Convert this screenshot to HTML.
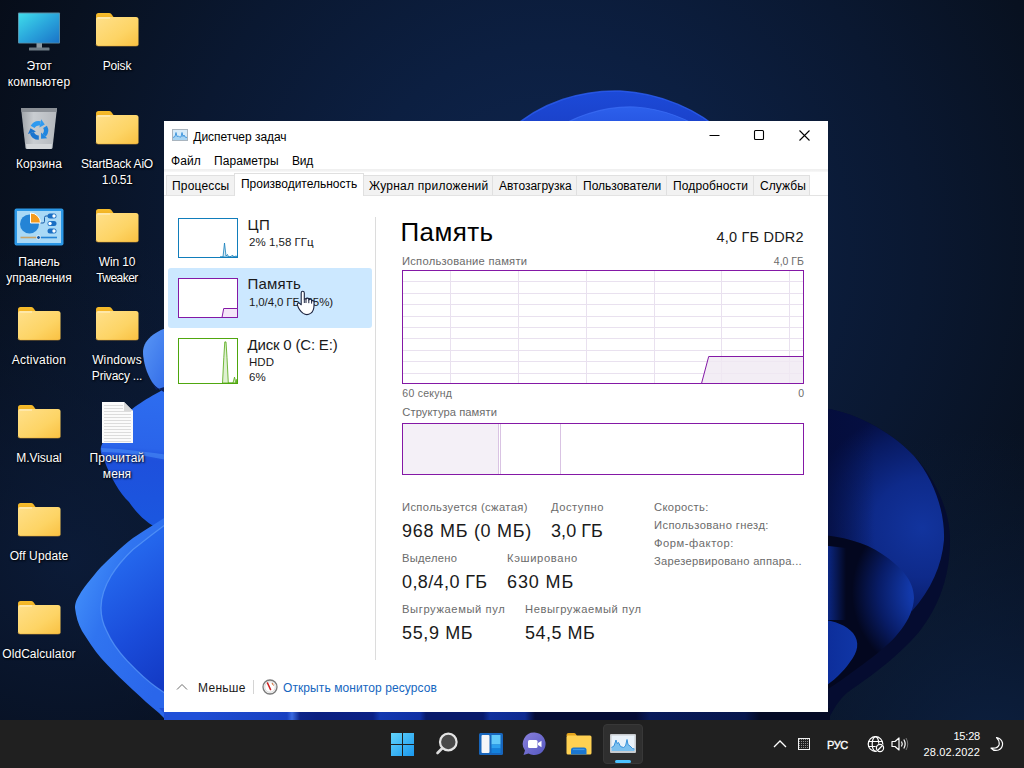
<!DOCTYPE html>
<html lang="ru">
<head>
<meta charset="utf-8">
<title>Диспетчер задач</title>
<style>
*{box-sizing:border-box;margin:0;padding:0}
html,body{width:1024px;height:768px;overflow:hidden}
body{position:relative;background:#08111f;font-family:"Liberation Sans",sans-serif;font-size:12px;color:#000}
.abs{position:absolute}
#wall{position:absolute;left:0;top:0;width:1024px;height:768px}
/* desktop icons */
.ico{position:absolute;width:78px;text-align:center;color:#fff;font-size:12px;line-height:16px;text-shadow:1px 1px 2px rgba(0,0,0,.95),0 0 2px rgba(0,0,0,.55)}
.ico svg{display:block;margin:0 auto}
.ico span{display:block;white-space:nowrap}
/* window */
#win{position:absolute;left:164px;top:121px;width:664px;height:591px;background:#fff}
.t{position:absolute;white-space:nowrap;line-height:1}
.g{color:#6b6b6b}
.tab{position:absolute;top:54px;height:21px;background:#f2f2f2;border:1px solid #e0e0e0;border-bottom:none}
/* taskbar */
#tb{position:absolute;left:0;top:720px;width:1024px;height:48px;background:#202020}
#tb .t{color:#fff}
</style>
</head>
<body>
<svg id="wall" viewBox="0 0 1024 768">
<defs>
<radialGradient id="bgG" gradientUnits="userSpaceOnUse" cx="550" cy="250" r="620"><stop offset="0" stop-color="#0f2650"/><stop offset="0.33" stop-color="#0c1f41"/><stop offset="0.6" stop-color="#0a1831"/><stop offset="0.85" stop-color="#081120"/><stop offset="1" stop-color="#060c18"/></radialGradient>
<linearGradient id="topA" x1="0" y1="0" x2="0" y2="1"><stop offset="0" stop-color="#1c4ad8"/><stop offset="1" stop-color="#1a3fc6"/></linearGradient>
<linearGradient id="topB" x1="0" y1="0" x2="0" y2="1"><stop offset="0" stop-color="#2c60ec"/><stop offset="1" stop-color="#2450dc"/></linearGradient>
<linearGradient id="lf1" x1="0" y1="0" x2="1" y2="1"><stop offset="0" stop-color="#5a98f6"/><stop offset="1" stop-color="#2a62e4"/></linearGradient>
<linearGradient id="lf2" gradientUnits="userSpaceOnUse" x1="150" y1="385" x2="140" y2="535"><stop offset="0" stop-color="#2e6ef0"/><stop offset="0.42" stop-color="#2a64ea"/><stop offset="0.5" stop-color="#1e50dc"/><stop offset="1" stop-color="#1a58e0"/></linearGradient>
<linearGradient id="lf3" gradientUnits="userSpaceOnUse" x1="75" y1="600" x2="175" y2="640"><stop offset="0" stop-color="#3f8af8"/><stop offset="0.3" stop-color="#3074f0"/><stop offset="1" stop-color="#2a66ea"/></linearGradient>
<linearGradient id="lf4" gradientUnits="userSpaceOnUse" x1="101" y1="580" x2="180" y2="680"><stop offset="0" stop-color="#2466ec"/><stop offset="0.5" stop-color="#1a4cda"/><stop offset="1" stop-color="#1238c2"/></linearGradient>
<radialGradient id="rtA" gradientUnits="userSpaceOnUse" cx="922" cy="528" r="118"><stop offset="0" stop-color="#12349e"/><stop offset="0.42" stop-color="#0e2a8a"/><stop offset="0.78" stop-color="#081a62"/><stop offset="1" stop-color="#050f42"/></radialGradient><linearGradient id="rtA2" gradientUnits="userSpaceOnUse" x1="826" y1="0" x2="875" y2="0"><stop offset="0" stop-color="#040c38" stop-opacity=".6"/><stop offset="1" stop-color="#040c38" stop-opacity="0"/></linearGradient><radialGradient id="bgG2" gradientUnits="userSpaceOnUse" cx="990" cy="760" r="330"><stop offset="0" stop-color="#0d2244" stop-opacity=".9"/><stop offset="1" stop-color="#0d2244" stop-opacity="0"/></radialGradient>
<radialGradient id="rtB" gradientUnits="userSpaceOnUse" cx="940" cy="592" r="88"><stop offset="0" stop-color="#1744be"/><stop offset="0.35" stop-color="#1238a8"/><stop offset="0.7" stop-color="#081c66"/><stop offset="1" stop-color="#03071f"/></radialGradient><linearGradient id="rtB2" gradientUnits="userSpaceOnUse" x1="827" y1="0" x2="846" y2="0"><stop offset="0" stop-color="#0b2888"/><stop offset="1" stop-color="#0b2888" stop-opacity="0"/></linearGradient>
<linearGradient id="rtC" x1="0" y1="0" x2="1" y2="0"><stop offset="0" stop-color="#0c2c98"/><stop offset="1" stop-color="#1036a6"/></linearGradient>
<linearGradient id="bs" gradientUnits="userSpaceOnUse" x1="164" y1="0" x2="830" y2="0"><stop offset="0.0000" stop-color="#2050d8"/><stop offset="0.0991" stop-color="#1c48cc"/><stop offset="0.1847" stop-color="#1840c0"/><stop offset="0.1922" stop-color="#3a6ae0"/><stop offset="0.2042" stop-color="#0c2488"/><stop offset="0.2297" stop-color="#0a1f80"/><stop offset="0.3138" stop-color="#0a2084"/><stop offset="0.3243" stop-color="#1238b0"/><stop offset="0.3844" stop-color="#1030a4"/><stop offset="0.3934" stop-color="#081a6a"/><stop offset="0.4790" stop-color="#081a6a"/><stop offset="0.4895" stop-color="#10309c"/><stop offset="0.5420" stop-color="#0e2a90"/><stop offset="0.5571" stop-color="#050c35"/><stop offset="0.7087" stop-color="#050c35"/><stop offset="0.7297" stop-color="#081a5a"/><stop offset="0.8724" stop-color="#07164c"/><stop offset="0.8949" stop-color="#040a25"/><stop offset="1.0000" stop-color="#040a25"/></linearGradient><radialGradient id="bgG3" gradientUnits="userSpaceOnUse" cx="70" cy="560" r="330"><stop offset="0" stop-color="#0c1d3c" stop-opacity=".85"/><stop offset="1" stop-color="#0c1d3c" stop-opacity="0"/></radialGradient><filter id="bl1"><feGaussianBlur stdDeviation="1.2"/></filter>
<filter id="bl3"><feGaussianBlur stdDeviation="3"/></filter>
</defs>
<rect width="1024" height="768" fill="url(#bgG)"/><rect width="1024" height="768" fill="url(#bgG2)"/><rect width="1024" height="768" fill="url(#bgG3)"/>
<!-- top bloom -->
<path d="M505 135 C540 100 585 90 620 91 C660 93 700 110 725 135 Z" fill="url(#topA)"/>
<path d="M545 135 C580 112 610 106 635 107 C665 109 690 120 712 135 Z" fill="url(#topB)"/>
<path d="M505 135 C540 100 585 90 620 91 C660 93 700 110 725 135" fill="none" stroke="#2c5cf0" stroke-width="1.500" opacity=".8"/>
<path d="M545 135 C580 112 610 106 635 107 C665 109 690 120 712 135" fill="none" stroke="#3a6cf4" stroke-width="1.200" opacity=".8"/>
<!-- right bloom -->
<path d="M820 408 C850 410 890 430 914 456 C935 478 950 510 950 540 C950 575 940 605 919 632 C895 660 865 680 848 692 C838 700 832 712 826 724 L820 724 Z" fill="#050c30"/>
<path d="M820 408 C850 410 890 430 914 456 C933 478 945 510 944 540 C942 565 931 590 912 611 C890 590 860 545 820 535 Z" fill="url(#rtA)"/>
<path d="M820 408 C850 410 890 430 914 456 L914 560 L820 535 Z" fill="url(#rtA2)"/>
<path d="M820 535 C840 536 865 542 882 554 C900 566 914 580 914 598 C913 620 895 640 874 656 C855 670 840 682 820 694 Z" fill="url(#rtB)"/>
<path d="M820 545 L846 548 L846 620 L820 620 Z" fill="url(#rtB2)"/>
<path d="M820 620 C835 620 847 626 853 633 C860 642 858 652 850 662 C843 672 835 680 820 690 Z" fill="url(#rtC)"/>
<!-- left bloom -->
<path d="M175 384 C165 388 140 402 131 410 C118 422 104 438 101 447 C100 452 102 456 104 460 C110 476 120 494 129 502 C136 512 146 524 162 530 L175 532 Z" fill="url(#lf2)"/>
<path d="M101 448 C125 449 150 452 175 456 L175 462 C150 456 125 452 102 452 Z" fill="#4d8ff8" opacity=".55"/>
<path d="M175 326 C160 328 143 338 143 352 C143 362 147 374 152 382 C156 388 162 392 175 396 Z" fill="url(#lf1)"/>
<path d="M152 382 C156 388 162 392 175 396 L175 384 C168 386 160 388 156 390 Z" fill="#0c1f5c"/>
<path d="M175 511 C160 521 145 530 133 538 C120 548 108 560 101 567 C92 577 82 590 80 594 C76 600 75 604 75 608 C76 616 78 624 82 631 C88 640 94 650 101 658 C110 668 120 678 133 690 C142 698 150 706 159 713 L170 724 L182 724 L182 505 Z" fill="url(#lf3)"/>
<path d="M175 518 C160 528 145 540 133 549.600 C124 558 116 568 111 576 C105 586 101 598 101 608 C101 616 103 624 106.700 631 C111 641 118 651 127 660.600 C136 670 146 680 156 687 L175 700 Z" fill="url(#lf4)"/>
<path d="M175 518 C160 528 145 540 133 549.600 C124 558 116 568 111 576 C105 586 101 598 101 608 C101 616 103 624 106.700 631 C111 641 118 651 127 660.600 C136 670 146 680 156 687 L175 700" fill="none" stroke="#5c9cfa" stroke-width="1.300" opacity=".7"/>
<!-- bottom strip -->
<rect x="164" y="708" width="666" height="14" fill="url(#bs)"/>
<path d="M159 708 L175 724 L200 724 L200 708 Z" fill="#2050d8"/>
</svg>

<div id="icons">
<svg width="0" height="0" style="position:absolute"><defs>
<linearGradient id="fB" x1="0" y1="0" x2="1" y2="1"><stop offset="0" stop-color="#ffe08a"/><stop offset="0.6" stop-color="#fdd465"/><stop offset="1" stop-color="#f9c142"/></linearGradient>
<linearGradient id="fT" x1="0" y1="0" x2="0" y2="1"><stop offset="0" stop-color="#f7bd2c"/><stop offset="1" stop-color="#e9a41a"/></linearGradient>

</defs></svg>
<div class="abs" style="left:9px;top:11.5px;width:60px;text-align:center;line-height:0"><svg style="display:inline-block" width="44" height="40" viewBox="0 0 44 40"><defs><linearGradient id="mS" x1="0" y1="0" x2="1" y2="1"><stop offset="0" stop-color="#3fdcea"/><stop offset="0.5" stop-color="#2aa6dc"/><stop offset="1" stop-color="#1a74c8"/></linearGradient></defs><rect x="19.500" y="31" width="5.500" height="5" fill="#8e9aa2"/><rect x="12" y="35.500" width="20.500" height="3" rx="0.5" fill="#6e7c86"/><rect x="1" y="0.5" width="42" height="31" rx="1" fill="#5d8ea4"/><rect x="1.800" y="1.500" width="40.400" height="29.200" fill="url(#mS)"/></svg></div>
<div class="ico" style="left:-11px;top:58px;width:100px"><span style="letter-spacing:-0.23px">Этот</span><span style="letter-spacing:0.24px">компьютер</span></div>
<div class="abs" style="left:87px;top:11px;width:60px;text-align:center;line-height:0"><svg style="display:inline-block" width="44" height="36" viewBox="0 0 44 36"><path d="M1 4.500 Q1 2 3.500 2 L14 2 Q15.500 2 16.500 3.200 L18.500 6 L1 12 Z" fill="url(#fT)"/><path d="M1 8 Q1 6 3 6 L41 6 Q43.500 6 43.500 8.500 L43.500 32.500 Q43.500 35 41 35 L3.500 35 Q1 35 1 32.500 Z" fill="url(#fB)"/><path d="M2.500 7 H15" stroke="#fff6d8" stroke-width="1" opacity=".9"/><path d="M1 33.500 Q1 35 3.500 35 L41 35 Q43.500 35 43.500 33.500" fill="none" stroke="#e8a838" stroke-width="0.8" opacity=".7"/></svg></div>
<div class="ico" style="left:67px;top:58px;width:100px"><span style="letter-spacing:-0.15px">Poisk</span></div>
<div class="abs" style="left:9px;top:106px;width:60px;text-align:center;line-height:0"><svg style="display:inline-block" width="40" height="44" viewBox="0 0 40 44"><defs><linearGradient id="bB" x1="0" y1="0" x2="1" y2="0"><stop offset="0" stop-color="#9ea3a8"/><stop offset="0.35" stop-color="#c9cdd1"/><stop offset="1" stop-color="#b4b8bd"/></linearGradient></defs><path d="M2 2 L38 2 L33.500 42 Q33.300 43 32 43 L8 43 Q6.700 43 6.500 42 Z" fill="url(#bB)"/><path d="M2 2 L38 2 L37.500 6 L2.500 6 Z" fill="#8a8f95"/><path d="M7 38 L33 38 L32.600 42 Q32.400 43 31.500 43 L8.500 43 Q7.600 43 7.400 42 Z" fill="#d4d7da"/><path d="M13.56 20.90 A7.20 7.20 0 0 1 21.30 17.46" fill="none" stroke="#2f9af0" stroke-width="4.300"/><path d="M22.17 13.35 L25.80 18.41 L20.42 21.57 Z" fill="#2f9af0"/><path d="M26.04 20.90 A7.20 7.20 0 0 1 25.15 29.32" fill="none" stroke="#1f86e0" stroke-width="4.300"/><path d="M28.27 32.13 L22.07 32.74 L22.03 26.51 Z" fill="#1f86e0"/><path d="M19.80 31.70 A7.20 7.20 0 0 1 12.95 26.72" fill="none" stroke="#1a74cf" stroke-width="4.300"/><path d="M8.96 28.02 L11.53 22.35 L16.95 25.43 Z" fill="#1a74cf"/></svg></div>
<div class="ico" style="left:-11px;top:156px;width:100px"><span style="letter-spacing:0.04px">Корзина</span></div>
<div class="abs" style="left:87px;top:109px;width:60px;text-align:center;line-height:0"><svg style="display:inline-block" width="44" height="36" viewBox="0 0 44 36"><path d="M1 4.500 Q1 2 3.500 2 L14 2 Q15.500 2 16.500 3.200 L18.500 6 L1 12 Z" fill="url(#fT)"/><path d="M1 8 Q1 6 3 6 L41 6 Q43.500 6 43.500 8.500 L43.500 32.500 Q43.500 35 41 35 L3.500 35 Q1 35 1 32.500 Z" fill="url(#fB)"/><path d="M2.500 7 H15" stroke="#fff6d8" stroke-width="1" opacity=".9"/><path d="M1 33.500 Q1 35 3.500 35 L41 35 Q43.500 35 43.500 33.500" fill="none" stroke="#e8a838" stroke-width="0.8" opacity=".7"/></svg></div>
<div class="ico" style="left:67px;top:156px;width:100px"><span style="letter-spacing:-0.21px">StartBack AiO</span><span style="letter-spacing:-0.48px">1.0.51</span></div>
<div class="abs" style="left:9px;top:208px;width:60px;text-align:center;line-height:0"><svg style="display:inline-block" width="50" height="38" viewBox="0 0 50 38"><rect x="0.5" y="0.5" width="49" height="37" rx="2" fill="#2b97e6"/><rect x="3" y="3" width="44" height="32" fill="#a9d9f6"/><circle cx="15.500" cy="16" r="9.500" fill="#2484d6"/><path d="M16.500 15 L16.500 5 A10 10 0 0 1 26.500 15 Z" fill="#f39a1e" stroke="#fff" stroke-width="1"/><path d="M26.500 15 H29 Q30.500 15 30.500 13.500 V9.500 Q30.500 8 32 8 H34" fill="none" stroke="#1a5fa8" stroke-width="1"/><rect x="33.500" y="5.500" width="9" height="5" rx="2.500" fill="#1a6fc4"/><circle cx="40" cy="8" r="1.700" fill="#fff"/><rect x="33.500" y="13" width="9" height="5" rx="2.500" fill="#1a6fc4"/><circle cx="36" cy="15.500" r="1.700" fill="#fff"/><rect x="33.500" y="20.500" width="9" height="5" rx="2.500" fill="#1a6fc4"/><circle cx="40" cy="23" r="1.700" fill="#fff"/><path d="M6.500 29.500 H23" stroke="#c9a368" stroke-width="1.600"/><path d="M26 29.500 H43" stroke="#2484d6" stroke-width="1.600"/><circle cx="24.500" cy="29.500" r="2" fill="#1a5fa8" stroke="#fff" stroke-width="0.8"/></svg></div>
<div class="ico" style="left:-11px;top:254px;width:100px"><span style="letter-spacing:-0.03px">Панель</span><span style="letter-spacing:0.02px">управления</span></div>
<div class="abs" style="left:87px;top:207px;width:60px;text-align:center;line-height:0"><svg style="display:inline-block" width="44" height="36" viewBox="0 0 44 36"><path d="M1 4.500 Q1 2 3.500 2 L14 2 Q15.500 2 16.500 3.200 L18.500 6 L1 12 Z" fill="url(#fT)"/><path d="M1 8 Q1 6 3 6 L41 6 Q43.500 6 43.500 8.500 L43.500 32.500 Q43.500 35 41 35 L3.500 35 Q1 35 1 32.500 Z" fill="url(#fB)"/><path d="M2.500 7 H15" stroke="#fff6d8" stroke-width="1" opacity=".9"/><path d="M1 33.500 Q1 35 3.500 35 L41 35 Q43.500 35 43.500 33.500" fill="none" stroke="#e8a838" stroke-width="0.8" opacity=".7"/></svg></div>
<div class="ico" style="left:67px;top:254px;width:100px"><span style="letter-spacing:-0.14px">Win 10</span><span style="letter-spacing:-0.54px">Tweaker</span></div>
<div class="abs" style="left:9px;top:305px;width:60px;text-align:center;line-height:0"><svg style="display:inline-block" width="44" height="36" viewBox="0 0 44 36"><path d="M1 4.500 Q1 2 3.500 2 L14 2 Q15.500 2 16.500 3.200 L18.500 6 L1 12 Z" fill="url(#fT)"/><path d="M1 8 Q1 6 3 6 L41 6 Q43.500 6 43.500 8.500 L43.500 32.500 Q43.500 35 41 35 L3.500 35 Q1 35 1 32.500 Z" fill="url(#fB)"/><path d="M2.500 7 H15" stroke="#fff6d8" stroke-width="1" opacity=".9"/><path d="M1 33.500 Q1 35 3.500 35 L41 35 Q43.500 35 43.500 33.500" fill="none" stroke="#e8a838" stroke-width="0.8" opacity=".7"/></svg></div>
<div class="ico" style="left:-11px;top:352px;width:100px"><span style="letter-spacing:0.23px">Activation</span></div>
<div class="abs" style="left:87px;top:305px;width:60px;text-align:center;line-height:0"><svg style="display:inline-block" width="44" height="36" viewBox="0 0 44 36"><path d="M1 4.500 Q1 2 3.500 2 L14 2 Q15.500 2 16.500 3.200 L18.500 6 L1 12 Z" fill="url(#fT)"/><path d="M1 8 Q1 6 3 6 L41 6 Q43.500 6 43.500 8.500 L43.500 32.500 Q43.500 35 41 35 L3.500 35 Q1 35 1 32.500 Z" fill="url(#fB)"/><path d="M2.500 7 H15" stroke="#fff6d8" stroke-width="1" opacity=".9"/><path d="M1 33.500 Q1 35 3.500 35 L41 35 Q43.500 35 43.500 33.500" fill="none" stroke="#e8a838" stroke-width="0.8" opacity=".7"/></svg></div>
<div class="ico" style="left:67px;top:352px;width:100px"><span style="letter-spacing:0.14px">Windows</span><span style="letter-spacing:-0.22px">Privacy ...</span></div>
<div class="abs" style="left:9px;top:403px;width:60px;text-align:center;line-height:0"><svg style="display:inline-block" width="44" height="36" viewBox="0 0 44 36"><path d="M1 4.500 Q1 2 3.500 2 L14 2 Q15.500 2 16.500 3.200 L18.500 6 L1 12 Z" fill="url(#fT)"/><path d="M1 8 Q1 6 3 6 L41 6 Q43.500 6 43.500 8.500 L43.500 32.500 Q43.500 35 41 35 L3.500 35 Q1 35 1 32.500 Z" fill="url(#fB)"/><path d="M2.500 7 H15" stroke="#fff6d8" stroke-width="1" opacity=".9"/><path d="M1 33.500 Q1 35 3.500 35 L41 35 Q43.500 35 43.500 33.500" fill="none" stroke="#e8a838" stroke-width="0.8" opacity=".7"/></svg></div>
<div class="ico" style="left:-11px;top:450px;width:100px"><span style="letter-spacing:-0.06px">M.Visual</span></div>
<div class="abs" style="left:87px;top:401px;width:60px;text-align:center;line-height:0"><svg style="display:inline-block" width="33" height="43" viewBox="0 0 33 43"><path d="M1 1 H23 L32 10 V42 H1 Z" fill="#fbfbfb"/><path d="M23 1 V10 H32 Z" fill="#d8d8d8"/><g stroke="#dcdcdc" stroke-width="1"><path d="M3 4.5 H22"/><path d="M3 7.5 H22"/><path d="M3 10.5 H30"/><path d="M3 13.5 H30"/><path d="M3 16.5 H30"/><path d="M3 19.5 H30"/><path d="M3 22.5 H30"/><path d="M3 25.5 H30"/><path d="M3 28.5 H30"/><path d="M3 31.5 H30"/><path d="M3 34.5 H30"/><path d="M3 37.5 H30"/><path d="M3 40.5 H30"/></g></svg></div>
<div class="ico" style="left:67px;top:450px;width:100px"><span style="letter-spacing:0.2px">Прочитай</span><span style="letter-spacing:0.06px">меня</span></div>
<div class="abs" style="left:9px;top:501px;width:60px;text-align:center;line-height:0"><svg style="display:inline-block" width="44" height="36" viewBox="0 0 44 36"><path d="M1 4.500 Q1 2 3.500 2 L14 2 Q15.500 2 16.500 3.200 L18.500 6 L1 12 Z" fill="url(#fT)"/><path d="M1 8 Q1 6 3 6 L41 6 Q43.500 6 43.500 8.500 L43.500 32.500 Q43.500 35 41 35 L3.500 35 Q1 35 1 32.500 Z" fill="url(#fB)"/><path d="M2.500 7 H15" stroke="#fff6d8" stroke-width="1" opacity=".9"/><path d="M1 33.500 Q1 35 3.500 35 L41 35 Q43.500 35 43.500 33.500" fill="none" stroke="#e8a838" stroke-width="0.8" opacity=".7"/></svg></div>
<div class="ico" style="left:-11px;top:548px;width:100px"><span style="letter-spacing:0.09px">Off Update</span></div>
<div class="abs" style="left:9px;top:599px;width:60px;text-align:center;line-height:0"><svg style="display:inline-block" width="44" height="36" viewBox="0 0 44 36"><path d="M1 4.500 Q1 2 3.500 2 L14 2 Q15.500 2 16.500 3.200 L18.500 6 L1 12 Z" fill="url(#fT)"/><path d="M1 8 Q1 6 3 6 L41 6 Q43.500 6 43.500 8.500 L43.500 32.500 Q43.500 35 41 35 L3.500 35 Q1 35 1 32.500 Z" fill="url(#fB)"/><path d="M2.500 7 H15" stroke="#fff6d8" stroke-width="1" opacity=".9"/><path d="M1 33.500 Q1 35 3.500 35 L41 35 Q43.500 35 43.500 33.500" fill="none" stroke="#e8a838" stroke-width="0.8" opacity=".7"/></svg></div>
<div class="ico" style="left:-11px;top:646px;width:100px"><span style="letter-spacing:0.05px">OldCalculator</span></div>
</div>

<div id="win">
<svg class="abs" style="left:8px;top:8px" width="16" height="14" viewBox="0 0 16 14"><rect x="0.5" y="0.5" width="15" height="11" fill="#d6ebf9" stroke="#a9b4be"/><path d="M1 8.500 L3 7.500 L4 3.500 L5 7.500 L6.500 7 L7.500 8 L9 8 L10 3.500 L11 7.500 L12 6 L13 8 L15 8.500 L15 11 L1 11 Z" fill="#a6d3f2"/><path d="M1 8.500 L3 7.500 L4 3.500 L5 7.500 L6.500 7 L7.500 8 L9 8 L10 3.500 L11 7.500 L12 6 L13 8 L15 8.500" fill="none" stroke="#3a93dc" stroke-width="0.9"/></svg>
<div class="t " style="left:29.3px;top:10.1px;font-size:12px;letter-spacing:-0.04px">Диспетчер задач</div>
<svg class="abs" style="left:540px;top:4px" width="115" height="22" viewBox="0 0 115 22"><path d="M5.500 10.500 H15.500" stroke="#000" stroke-width="1" fill="none"/><rect x="50.5" y="5.5" width="9" height="9" rx="1" fill="none" stroke="#000" stroke-width="1.1"/><path d="M95.5 5.5 L105.5 15.5 M105.5 5.5 L95.5 15.5" stroke="#000" stroke-width="1.1" fill="none"/></svg>
<div class="t " style="left:7px;top:34px;font-size:12px;letter-spacing:0.1px">Файл</div>
<div class="t " style="left:50px;top:34px;font-size:12px;letter-spacing:0.08px">Параметры</div>
<div class="t " style="left:128px;top:34px;font-size:12px;letter-spacing:-0.27px">Вид</div>
<div class="abs" style="left:0;top:48px;width:664px;height:3px;background:linear-gradient(#efefef 0,#f2f2f2 66%,#fafafa 100%)"></div>
<div class="tab" style="left:2px;width:70px"></div>
<div class="t " style="left:8px;top:59px;font-size:12px;letter-spacing:0.17px">Процессы</div>
<div class="tab" style="left:199px;width:130px"></div>
<div class="t " style="left:205px;top:59px;font-size:12px;letter-spacing:0.24px">Журнал приложений</div>
<div class="tab" style="left:328px;width:85px"></div>
<div class="t " style="left:335px;top:59px;font-size:12px;letter-spacing:-0.02px">Автозагрузка</div>
<div class="tab" style="left:412px;width:91px"></div>
<div class="t " style="left:419px;top:59px;font-size:12px;letter-spacing:-0.0px">Пользователи</div>
<div class="tab" style="left:502px;width:88px"></div>
<div class="t " style="left:509px;top:59px;font-size:12px;letter-spacing:0.13px">Подробности</div>
<div class="tab" style="left:589px;width:57px"></div>
<div class="t " style="left:596px;top:59px;font-size:12px;letter-spacing:0.09px">Службы</div>
<div class="abs" style="left:0;top:74px;width:664px;height:1px;background:#e3e3e3"></div>
<div class="abs" style="left:70px;top:52px;width:130px;height:23px;background:#fff;border:1px solid #e0e0e0;border-bottom:none"></div>
<div class="t " style="left:77px;top:57.2px;font-size:12px;letter-spacing:-0.02px">Производительность</div>
<div class="abs" style="left:4px;top:147px;width:204px;height:60px;background:#cce8ff;border-radius:3px"></div>
<svg class="abs" style="left:14px;top:97px" width="60" height="40" viewBox="0 0 60 40"><rect x="0.5" y="0.5" width="59" height="39" fill="#fff" stroke="#117dbb"/><path d="M42 39 L45 39 L46.500 25 L48 38 L49.500 36.500 L50.500 39 L53 38.500 L54.500 37 L55.500 39 L58 38 L59 38.500 L59 39 Z" fill="#d9eaf4" stroke="#117dbb" stroke-width="0.8"/></svg>
<div class="t " style="left:83.5px;top:95.5px;font-size:15px;color:#1a1a1a;letter-spacing:0.5px">ЦП</div>
<div class="t " style="left:85px;top:116.4px;font-size:11.5px;color:#1a1a1a;letter-spacing:0.02px">2% 1,58 ГГц</div>
<svg class="abs" style="left:14px;top:157px" width="60" height="40" viewBox="0 0 60 40"><rect x="0.5" y="0.5" width="59" height="39" fill="#fff" stroke="#8418a6"/><path d="M44 39.500 L45.700 30.500 L59.500 30.500 L59.500 39.500 Z" fill="#f4e6f8" stroke="#8418a6" stroke-width="1"/></svg>
<div class="t " style="left:83.5px;top:155.3px;font-size:15px;color:#1a1a1a;letter-spacing:0.21px">Память</div>
<div class="t " style="left:85px;top:176.2px;font-size:11.5px;color:#1a1a1a;letter-spacing:-0.13px">1,0/4,0 ГБ (25%)</div>
<svg class="abs" style="left:14px;top:217px" width="60" height="46" viewBox="0 0 60 47" preserveAspectRatio="none"><rect x="0.5" y="0.5" width="59" height="46" fill="#fff" stroke="#4da60c"/><path d="M44.500 46 L45.800 20 L46.800 4 L48 4 L49 20 L50.300 46 L55 46 L56.500 40 L58 46 L59 42 L59 46 Z" fill="#dff0d2" stroke="#4da60c" stroke-width="0.8"/></svg>
<div class="t " style="left:83.5px;top:216.0px;font-size:15px;color:#1a1a1a;letter-spacing:-0.19px">Диск 0 (C: E:)</div>
<div class="t " style="left:85px;top:236.3px;font-size:11.5px;color:#1a1a1a;letter-spacing:0.03px">HDD</div>
<div class="t " style="left:85px;top:251.3px;font-size:11.5px;color:#1a1a1a;letter-spacing:0.04px">6%</div>
<div class="abs" style="left:211px;top:96px;width:1px;height:443px;background:#dcdcdc"></div>
<div class="t " style="left:236.5px;top:97.5px;font-size:26px;color:#000;letter-spacing:0.41px">Память</div>
<div class="t " style="right:24.2px;top:108.6px;font-size:14.5px;color:#1a1a1a;letter-spacing:0.2px">4,0 ГБ DDR2</div>
<div class="t g" style="left:238px;top:135.4px;font-size:11.2px;letter-spacing:0.24px">Использование памяти</div>
<div class="t g" style="right:24px;top:134.6px;font-size:10.5px;letter-spacing:0.02px">4,0 ГБ</div>
<svg class="abs" style="left:238px;top:149px" width="402" height="114" viewBox="0 0 402 114"><rect x="0.5" y="0.5" width="401" height="113" fill="#fff" stroke="#8418a6"/><path d="M1 11.5 H401" stroke="#e9e1ef" stroke-width="1"/><path d="M1 23.5 H401" stroke="#e9e1ef" stroke-width="1"/><path d="M1 34.5 H401" stroke="#e9e1ef" stroke-width="1"/><path d="M1 46.5 H401" stroke="#e9e1ef" stroke-width="1"/><path d="M1 57.5 H401" stroke="#e9e1ef" stroke-width="1"/><path d="M1 68.5 H401" stroke="#e9e1ef" stroke-width="1"/><path d="M1 80.5 H401" stroke="#e9e1ef" stroke-width="1"/><path d="M1 91.5 H401" stroke="#e9e1ef" stroke-width="1"/><path d="M1 103.5 H401" stroke="#e9e1ef" stroke-width="1"/><path d="M48.5 1 V113" stroke="#e9e1ef" stroke-width="1"/><path d="M116.5 1 V113" stroke="#e9e1ef" stroke-width="1"/><path d="M184.5 1 V113" stroke="#e9e1ef" stroke-width="1"/><path d="M252.5 1 V113" stroke="#e9e1ef" stroke-width="1"/><path d="M319.5 1 V113" stroke="#e9e1ef" stroke-width="1"/><path d="M387.5 1 V113" stroke="#e9e1ef" stroke-width="1"/><path d="M299.500 113.500 L306.700 86.500 L401.500 86.500 L401.500 113.500 Z" fill="#f0e9f3" fill-opacity="0.8" stroke="#8418a6" stroke-width="1"/></svg>
<div class="t g" style="left:238.3px;top:266.9px;font-size:10.5px;letter-spacing:0.26px">60 секунд</div>
<div class="t g" style="right:24px;top:266.9px;font-size:10.5px;letter-spacing:-0.04px">0</div>
<div class="t g" style="left:238.3px;top:286.1px;font-size:11.2px;letter-spacing:0.07px">Структура памяти</div>
<svg class="abs" style="left:238px;top:302px" width="402" height="52" viewBox="0 0 402 52"><rect x="0.5" y="0.5" width="401" height="51" fill="#fff" stroke="#8418a6"/><rect x="1" y="1" width="95" height="50" fill="#f4f0f7"/><path d="M96.500 1 V51 M98.500 1 V51 M158.500 1 V51" stroke="#d9c3e3" stroke-width="1"/></svg>
<div class="t g" style="left:238px;top:381.3px;font-size:11.2px;letter-spacing:0.37px">Используется (сжатая)</div>
<div class="t " style="left:238px;top:400.8px;font-size:18px;color:#1a1a1a;letter-spacing:0.72px">968 МБ (0 МБ)</div>
<div class="t g" style="left:387px;top:381.3px;font-size:11.2px;letter-spacing:0.51px">Доступно</div>
<div class="t " style="left:387px;top:400.8px;font-size:18px;color:#1a1a1a;letter-spacing:0.07px">3,0 ГБ</div>
<div class="t g" style="left:238px;top:432.3px;font-size:11.2px;letter-spacing:0.27px">Выделено</div>
<div class="t " style="left:238px;top:451.8px;font-size:18px;color:#1a1a1a;letter-spacing:0.39px">0,8/4,0 ГБ</div>
<div class="t g" style="left:343px;top:432.3px;font-size:11.2px;letter-spacing:0.65px">Кэшировано</div>
<div class="t " style="left:343px;top:451.8px;font-size:18px;color:#1a1a1a;letter-spacing:0.88px">630 МБ</div>
<div class="t g" style="left:238px;top:483.3px;font-size:11.2px;letter-spacing:0.6px">Выгружаемый пул</div>
<div class="t " style="left:238px;top:502.8px;font-size:18px;color:#1a1a1a;letter-spacing:0.64px">55,9 МБ</div>
<div class="t g" style="left:361px;top:483.3px;font-size:11.2px;letter-spacing:0.56px">Невыгружаемый пул</div>
<div class="t " style="left:361px;top:502.8px;font-size:18px;color:#1a1a1a;letter-spacing:0.49px">54,5 МБ</div>
<div class="t g" style="left:490px;top:381.3px;font-size:11.2px;letter-spacing:0.36px">Скорость:</div>
<div class="t g" style="left:490px;top:399.3px;font-size:11.2px;letter-spacing:0.38px">Использовано гнезд:</div>
<div class="t g" style="left:490px;top:417.3px;font-size:11.2px;letter-spacing:0.54px">Форм-фактор:</div>
<div class="t g" style="left:490px;top:435.3px;font-size:11.2px;letter-spacing:0.27px">Зарезервировано аппара...</div>
<svg class="abs" style="left:12px;top:561px" width="12" height="10" viewBox="0 0 12 10"><path d="M1 7.500 L6 2.500 L11 7.500" fill="none" stroke="#6e6e6e" stroke-width="1"/></svg>
<div class="t " style="left:34px;top:561px;font-size:12px;color:#1a1a1a;letter-spacing:0.29px">Меньше</div>
<div class="abs" style="left:89px;top:559px;width:1px;height:14px;background:#d4d4d4"></div>
<svg class="abs" style="left:98px;top:558px" width="16" height="16" viewBox="0 0 16 16"><circle cx="8" cy="8" r="7" fill="#f4f4f4" stroke="#7a7a7a" stroke-width="1.3"/><circle cx="8" cy="8" r="5.2" fill="#fff" stroke="#c8c8c8" stroke-width="0.6"/><path d="M8.500 10.500 L5.500 4" stroke="#d02020" stroke-width="1.6" stroke-linecap="round"/><path d="M10 4 L11.500 6.500" stroke="#d06020" stroke-width="1"/></svg>
<div class="t " style="left:119px;top:561px;font-size:12px;color:#1566c0;letter-spacing:0.09px">Открыть монитор ресурсов</div>
</div>

<div id="tb">
<svg class="abs" style="left:391px;top:13px" width="23" height="23" viewBox="0 0 23 23"><defs><linearGradient id="wG" x1="0" y1="0" x2="1" y2="1"><stop offset="0" stop-color="#62d4fb"/><stop offset="1" stop-color="#1a98ef"/></linearGradient></defs><path d="M0 0 H11 V11 H0 Z M12 0 H23 V11 H12 Z M0 12 H11 V23 H0 Z M12 12 H23 V23 H12 Z" fill="url(#wG)"/></svg>
<svg class="abs" style="left:434px;top:11px" width="26" height="26" viewBox="0 0 26 26"><path d="M8 17.500 L3.500 22" stroke="#dcdcdc" stroke-width="2.600" stroke-linecap="round"/><circle cx="14.300" cy="11" r="8.300" fill="#4a4a4a" stroke="#e4e4e4" stroke-width="2.200"/></svg>
<svg class="abs" style="left:479px;top:13px" width="24" height="22" viewBox="0 0 24 22"><rect x="0" y="0" width="24" height="22" rx="1.500" fill="#1766bd"/><rect x="2.500" y="2" width="8" height="18" rx="1" fill="#f4f6f8"/><rect x="12.500" y="2" width="9" height="9.500" fill="#62c9f9"/><rect x="12.500" y="11.500" width="9" height="4" fill="#2ba0ee"/><rect x="12.500" y="15.500" width="9" height="4.500" fill="#1482dd"/></svg>
<svg class="abs" style="left:522px;top:12px" width="25" height="25" viewBox="0 0 25 25"><defs><linearGradient id="cG" x1="0" y1="0" x2="1" y2="1"><stop offset="0" stop-color="#8a80dc"/><stop offset="1" stop-color="#5558c0"/></linearGradient></defs><path d="M12.700 0.500 A11.300 11.300 0 1 1 6.500 21.500 L1.500 23 L3 18.500 A11.300 11.300 0 0 1 12.700 0.500 Z" fill="url(#cG)"/><rect x="6" y="8" width="9.500" height="8" rx="1.500" fill="#fff"/><path d="M16 11 L19.500 8.800 V15.200 L16 13 Z" fill="#fff"/></svg>
<svg class="abs" style="left:566px;top:12px" width="26" height="23" viewBox="0 0 26 23"><path d="M0.500 3 Q0.500 1 2.500 1 H8 Q9 1 9.800 2 L11 4 H0.500 Z" fill="#e5a41c"/><path d="M0.500 5 Q0.500 3.500 2 3.500 H24 Q25.500 3.500 25.500 5 V21 Q25.500 22.500 24 22.500 H2 Q0.500 22.500 0.500 21 Z" fill="#ffd152"/><path d="M5 18 Q5 15.500 7.500 15.500 H18 Q20.500 15.500 20.500 18 V22.500 H5 Z" fill="#1b76cf"/><path d="M7 17.500 H18.500" stroke="#3c98e8" stroke-width="1.200"/></svg>
<div class="abs" style="left:603px;top:4px;width:40px;height:40px;border-radius:4px;background:#2f2f2f;border:1px solid #383838"></div>
<svg class="abs" style="left:610px;top:14px" width="26" height="19" viewBox="0 0 26 19"><rect x="0" y="0" width="26" height="19" rx="1" fill="#c8ccd0"/><rect x="1.500" y="1.500" width="23" height="15.500" fill="#e9f2fa"/><path d="M1.500 13.500 L4 12 L6 6 L7 9.500 L8.500 8.500 L10.500 12.500 L13.500 13.500 L15.500 12 L17 5.500 L18 10.500 L20 12 L22.500 14.500 L24.500 15 V17 H1.500 Z" fill="#7cc0ee"/><path d="M1.500 13.500 L4 12 L6 6 L7 9.500 L8.500 8.500 L10.500 12.500 L13.500 13.500 L15.500 12 L17 5.500 L18 10.500 L20 12 L22.500 14.500 L24.500 15" fill="none" stroke="#2b8ad8" stroke-width="0.9"/></svg>
<div class="abs" style="left:615px;top:40px;width:16px;height:3px;border-radius:1.500px;background:#4cc2ff"></div>
<svg class="abs" style="left:772px;top:19px" width="16" height="10" viewBox="0 0 16 10"><path d="M2 8 L8 2 L14 8" fill="none" stroke="#fff" stroke-width="1.300"/></svg>
<svg class="abs" style="left:797px;top:17px" width="14" height="14" viewBox="0 0 14 14"><defs><pattern id="dp" width="2" height="2" patternUnits="userSpaceOnUse"><rect width="1" height="1" fill="#8c8c8c"/></pattern></defs><rect x="2" y="2" width="10" height="10" fill="url(#dp)"/><rect x="1.500" y="1.500" width="11" height="11" fill="none" stroke="#f0f0f0" stroke-width="1"/></svg>
<div class="t" style="left:827px;top:19.500px;font-size:11px;font-weight:normal;-webkit-text-stroke:0.35px #fff;letter-spacing:-0.38px">РУС</div>
<svg class="abs" style="left:867px;top:15px" width="19" height="18" viewBox="0 0 19 18"><g fill="none" stroke="#fff" stroke-width="1.200"><circle cx="8.500" cy="9" r="7.300"/><ellipse cx="8.500" cy="9" rx="3.300" ry="7.300"/><path d="M1.500 6.500 H15.500 M1.500 11.500 H9"/></g><circle cx="13" cy="13" r="4.600" fill="#202020"/><circle cx="13" cy="13" r="3.600" fill="none" stroke="#fff" stroke-width="1.200"/><path d="M10.500 15.500 L15.500 10.500" stroke="#fff" stroke-width="1.200"/></svg>
<svg class="abs" style="left:891px;top:17px" width="18" height="14" viewBox="0 0 18 14"><path d="M1 4.500 H4 L8 1 V13 L4 9.500 H1 Z" fill="none" stroke="#fff" stroke-width="1.200" stroke-linejoin="round"/><path d="M10.500 4.500 Q12 7 10.500 9.500" fill="none" stroke="#fff" stroke-width="1.200"/><path d="M12.800 2.500 Q15.500 7 12.800 11.500" fill="none" stroke="#fff" stroke-width="1.200"/><path d="M15 1 Q18.500 7 15 13" fill="none" stroke="#777" stroke-width="1"/></svg>
<div class="t" style="right:44px;top:11px;font-size:11px;letter-spacing:-0.19px">15:28</div>
<div class="t" style="right:44px;top:27px;font-size:11px;letter-spacing:0.15px">28.02.2022</div>
<svg class="abs" style="left:988px;top:16px" width="16" height="16" viewBox="0 0 16 16"><path d="M8.500 1.500 Q12 5 11 9 Q9.500 13 3 12 Q6 15.500 10.500 14 Q15 12 14.500 7 Q13.500 2.500 8.500 1.500 Z" fill="none" stroke="#fff" stroke-width="1.200" stroke-linejoin="round"/></svg>
</div>
<svg class="abs" style="left:296px;top:290px;z-index:50" width="20" height="26" viewBox="0 0 20 26"><path d="M6.700 1.200 C5.700 1.200 5.200 2 5.200 3 L5.200 14.800 L3.600 13.400 C2.600 12.600 1.100 13.400 1.400 14.800 C2.200 17.800 4.600 21.400 7.200 23.400 C9.400 24.900 12.400 24.900 14.600 23.400 C17 21.600 18 18.800 18 15.400 L18 11.800 C18 10.400 16 10.200 15.600 11.400 L15.600 10.400 C15.600 8.900 13.200 8.700 12.800 10 L12.800 9.400 C12.800 7.900 10.400 7.700 10 9 L8.300 9 L8.300 3 C8.300 2 7.700 1.200 6.700 1.200 Z" fill="#fff" stroke="#1c2440" stroke-width="1.100" stroke-linejoin="round"/><path d="M10 9 V13 M12.800 10 V13.200 M15.600 11.400 V13.600 M8.300 9 V13" stroke="#1c2440" stroke-width="1" fill="none"/></svg>
</body>
</html>
